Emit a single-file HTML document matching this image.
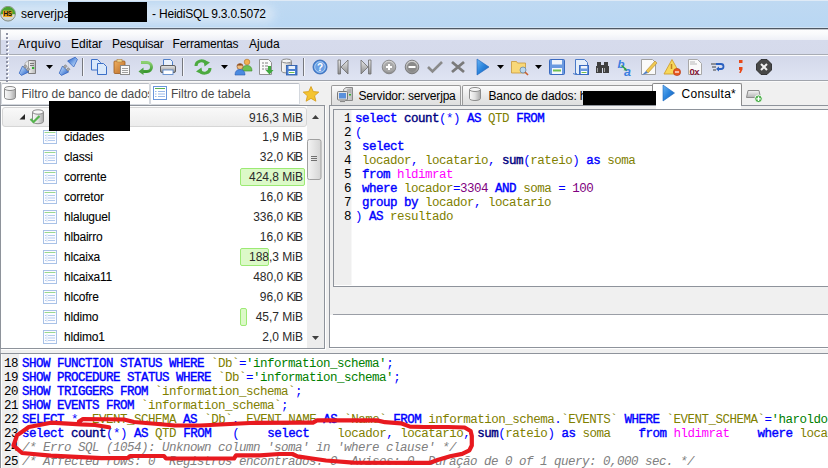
<!DOCTYPE html>
<html><head><meta charset="utf-8">
<style>
*{margin:0;padding:0;box-sizing:border-box}
body{width:828px;height:468px;overflow:hidden;position:relative;background:#f0f0f0;font-family:"Liberation Sans",sans-serif;font-size:12px;color:#000}
.a{position:absolute}
.t{white-space:pre;position:absolute;line-height:14px}
#title{left:0;top:0;width:828px;height:30px;background:linear-gradient(#dfeaf6 0px,#dfeaf6 1px,#bfd9f2 1px,#b9d7f3 27px,#d0e2f3 27px,#d0e2f3 28px,#4e5864 28px,#4e5864 29px,#c4c8ce 29px,#c4c8ce 30px)}
#menu{left:0;top:30px;width:828px;height:24px;background:linear-gradient(#fdfdfe 0px,#f9fafc 4px,#eef0f7 10px,#d6dbec 10px,#d5daeb 24px)}
#tool{left:0;top:54px;width:828px;height:28px;background:linear-gradient(#a8acb4 0px,#a8acb4 1px,#fafbfd 1px,#fafbfd 2px,#d3d8ea 2px,#dfe4f3 26px,#a0a4ac 26px,#a0a4ac 27px,#fafafa 27px,#fafafa 28px)}
.code{font-family:"Liberation Mono",monospace;font-size:12.5px;letter-spacing:-0.5px;line-height:14px;white-space:pre}
.k{color:#0000ff;-webkit-text-stroke:0.4px #0000ff}
.f{color:#000080;-webkit-text-stroke:0.4px #000080}
.i{color:#808000}
.s{color:#0000ff}
.n{color:#800080}
.tb{color:#ff00ff}
.st{color:#008000}
.c{color:#808080;font-style:italic}
.tree .r{position:absolute;left:0;width:305px;height:20px}
.tree .nm{position:absolute;left:62px;top:3px;white-space:pre;letter-spacing:-0.2px;-webkit-text-stroke:0.08px #000}
.tree .sz{position:absolute;right:4px;top:3px;white-space:pre;color:#2a2a2a}
.bar{position:absolute;left:238px;top:1px;height:18px;background:#dcf9c8;border:1px solid #9cea74;border-radius:2px}
.ti{position:absolute;left:41px;top:3px;width:14px;height:14px}
</style></head><body>

<!-- title bar -->
<div id="title" class="a"></div>
<div class="a" style="left:-10px;top:5px;width:285px;height:18px;background:#d8e7f6;border-radius:9px;filter:blur(4px);opacity:0.9"></div>
<svg class="a" style="left:0;top:6px" width="16" height="16" viewBox="0 0 16 16">
  <defs><linearGradient id="hsw" x1="0" y1="0" x2="0" y2="1"><stop offset="0" stop-color="#fafafa"/><stop offset="1" stop-color="#c8ccc8"/></linearGradient></defs>
  <circle cx="8" cy="7.7" r="7.4" fill="url(#hsw)" stroke="#7a8478" stroke-width="0.9"/>
  <path d="M0.6 8.2 A7.4 7.4 0 0 1 15.4 8.2 Z" fill="#4aa232"/>
  <rect x="3" y="4.6" width="9.3" height="6.4" fill="#f4a81e"/>
  <text x="7.7" y="10" font-family="Liberation Sans" font-weight="bold" font-size="6.4" text-anchor="middle" fill="#111" letter-spacing="-0.2">HS</text>
</svg>
<div class="t" style="left:21px;top:7px;font-size:12px;color:#000">serverjpa</div>
<div class="a" style="left:68px;top:2px;width:79px;height:20px;background:#000"></div>
<div class="t" style="left:149px;top:7px;font-size:12px;color:#000;letter-spacing:-0.22px"> - HeidiSQL 9.3.0.5072</div>

<!-- menu -->
<div id="menu" class="a"></div>
<div class="a" style="left:0;top:29px;width:1px;height:439px;background:#a8abb2"></div>
<div class="t" style="left:18px;top:37px;letter-spacing:0.35px">Arquivo</div>
<div class="t" style="left:71px;top:37px">Editar</div>
<div class="t" style="left:112px;top:37px;letter-spacing:-0.2px">Pesquisar</div>
<div class="t" style="left:172.5px;top:37px;letter-spacing:-0.2px">Ferramentas</div>
<div class="t" style="left:249px;top:37px">Ajuda</div>

<!-- toolbar -->
<div id="tool" class="a"></div>

<svg class="a" style="left:0;top:0" width="828" height="110" viewBox="0 0 828 110">
<defs>
<linearGradient id="gsrv" x1="0" x2="1"><stop offset="0" stop-color="#f4f4f4"/><stop offset="1" stop-color="#b8b8b8"/></linearGradient>
<linearGradient id="gblue" x1="0" y1="0" x2="0" y2="1"><stop offset="0" stop-color="#a8c8f0"/><stop offset="1" stop-color="#4a84d8"/></linearGradient>
<linearGradient id="ggray" x1="0" y1="0" x2="0" y2="1"><stop offset="0" stop-color="#e8e8e8"/><stop offset="1" stop-color="#8c8c8c"/></linearGradient>
<linearGradient id="gorange" x1="0" y1="0" x2="1" y2="1"><stop offset="0" stop-color="#f0b060"/><stop offset="1" stop-color="#b86a28"/></linearGradient>
<linearGradient id="ggreen" x1="0" y1="0" x2="0" y2="1"><stop offset="0" stop-color="#8cd070"/><stop offset="1" stop-color="#3a9a30"/></linearGradient>
<linearGradient id="gcirc" x1="0" y1="0" x2="0" y2="1"><stop offset="0" stop-color="#d8d8d8"/><stop offset="1" stop-color="#8a8a8a"/></linearGradient>
<linearGradient id="gcyl" x1="0" x2="1"><stop offset="0" stop-color="#fafafa"/><stop offset="0.5" stop-color="#e0e0e0"/><stop offset="1" stop-color="#a8a8a8"/></linearGradient>
<linearGradient id="gthumb" x1="0" x2="1"><stop offset="0" stop-color="#f4f4f4"/><stop offset="1" stop-color="#d4d4d4"/></linearGradient>
<linearGradient id="gplug" x1="0" y1="0" x2="0" y2="1"><stop offset="0" stop-color="#b4d0f4"/><stop offset="0.5" stop-color="#7aa6e6"/><stop offset="1" stop-color="#3c70cc"/></linearGradient>
<linearGradient id="gnt" x1="0" y1="0" x2="0" y2="1"><stop offset="0" stop-color="#f4f4f4"/><stop offset="1" stop-color="#b4b4b4"/></linearGradient>
<linearGradient id="gplay" x1="0" y1="0" x2="1" y2="1"><stop offset="0" stop-color="#6ab4f4"/><stop offset="0.5" stop-color="#2a84dc"/><stop offset="1" stop-color="#1a5cb4"/></linearGradient>
<linearGradient id="gtab" x1="0" y1="0" x2="0" y2="1"><stop offset="0" stop-color="#fbfbfb"/><stop offset="1" stop-color="#e4e4e4"/></linearGradient>
</defs>
<!-- grippers -->
<g><rect x="7" y="34" width="2" height="2" fill="#ffffff"/><rect x="6" y="33" width="2" height="2" fill="#8e92a4"/><rect x="7" y="38" width="2" height="2" fill="#ffffff"/><rect x="6" y="37" width="2" height="2" fill="#8e92a4"/><rect x="7" y="42" width="2" height="2" fill="#ffffff"/><rect x="6" y="41" width="2" height="2" fill="#8e92a4"/><rect x="7" y="46" width="2" height="2" fill="#ffffff"/><rect x="6" y="45" width="2" height="2" fill="#8e92a4"/><rect x="7" y="50" width="2" height="2" fill="#ffffff"/><rect x="6" y="49" width="2" height="2" fill="#8e92a4"/><rect x="7" y="54" width="2" height="2" fill="#ffffff"/><rect x="6" y="53" width="2" height="2" fill="#8e92a4"/><rect x="7" y="58" width="2" height="2" fill="#ffffff"/><rect x="6" y="57" width="2" height="2" fill="#8e92a4"/><rect x="7" y="62" width="2" height="2" fill="#ffffff"/><rect x="6" y="61" width="2" height="2" fill="#8e92a4"/><rect x="7" y="66" width="2" height="2" fill="#ffffff"/><rect x="6" y="65" width="2" height="2" fill="#8e92a4"/><rect x="7" y="70" width="2" height="2" fill="#ffffff"/><rect x="6" y="69" width="2" height="2" fill="#8e92a4"/><rect x="7" y="74" width="2" height="2" fill="#ffffff"/><rect x="6" y="73" width="2" height="2" fill="#8e92a4"/><rect x="7" y="78" width="2" height="2" fill="#ffffff"/><rect x="6" y="77" width="2" height="2" fill="#8e92a4"/><rect x="7" y="81" width="2" height="2" fill="#ffffff"/><rect x="6" y="80" width="2" height="2" fill="#8e92a4"/></g>
<!-- 1 server+plug -->
<path d="M28.5 60.5 h7 v13 h-7 z" fill="url(#gsrv)" stroke="#7c7c7c"/>
<path d="M25 63 L28.5 60.5 L28.5 68 L25 68 Z" fill="#e8e8e8" stroke="#9a9a9a" stroke-width="0.6"/>
<path d="M30 63.5h4M30 65.5h4" stroke="#7a7a7a"/>
<rect x="32" y="67" width="2.2" height="2" fill="#30b030"/>
<g transform="translate(20.3 74.3) rotate(-45)"><path d="M0 -1.6 L0 1.6 L7.5 4.3 L7.5 -4.3 Z" fill="url(#gplug)" stroke="#2f62c0" stroke-width="0.7"/><rect x="7.6" y="-3.2" width="2.8" height="2.3" fill="#a8a8a8" stroke="#6a6a6a" stroke-width="0.5"/><rect x="7.6" y="0.9" width="2.8" height="2.3" fill="#a8a8a8" stroke="#6a6a6a" stroke-width="0.5"/></g>
<!-- dropdown -->
<path d="M46 65h7l-3.5 4z" fill="#000"/>
<!-- 2 plug -->
<g transform="translate(60.3 74.3) rotate(-45)"><path d="M0 -1.6 L0 1.6 L7.5 4.3 L7.5 -4.3 Z" fill="url(#gplug)" stroke="#2f62c0" stroke-width="0.7"/><rect x="7.6" y="-3.2" width="2.8" height="2.3" fill="#a8a8a8" stroke="#6a6a6a" stroke-width="0.5"/><rect x="7.6" y="0.9" width="2.8" height="2.3" fill="#a8a8a8" stroke="#6a6a6a" stroke-width="0.5"/></g>
<g transform="translate(76.3 58.3) rotate(135)"><path d="M0 -1.6 L0 1.6 L8 4.3 L8 -4.3 Z" fill="url(#gplug)" stroke="#2f62c0" stroke-width="0.7"/></g>
<!-- separators -->
<path d="M82.5 58v18M182.5 58v18M303.5 58v18" stroke="#76787e"/>
<path d="M83.5 58v18M183.5 58v18M304.5 58v18" stroke="#f4f6fb"/>
<!-- copy -->
<path d="M91.5 59.5h6l3 3v7.5h-9z" fill="#dbe9fa" stroke="#3c70c8"/>
<path d="M97.5 63.5h6l3 3v8h-9z" fill="#dbe9fa" stroke="#3c70c8"/>
<!-- paste -->
<rect x="114" y="61" width="11" height="12.5" rx="1" fill="url(#gorange)" stroke="#9a5a20" stroke-width="0.8"/>
<rect x="117" y="59.5" width="5" height="2.5" fill="#f0d890" stroke="#b08040" stroke-width="0.6"/>
<rect x="120.5" y="65.5" width="9" height="9" fill="#fafafa" stroke="#8a8a8a"/>
<path d="M122 68.5h6M122 70.5h6M122 72.5h6" stroke="#a0a0a0"/>
<!-- undo -->
<path d="M141 62.5 H147 A4.5 4.5 0 0 1 147 71.5 H143" fill="none" stroke="url(#ggreen)" stroke-width="3"/>
<path d="M138.5 71.5 L143.5 67.5 L143.5 75 Z" fill="#4aa040"/>
<!-- print -->
<path d="M163.5 66v-6.5h7l2 2v4.5" fill="#eaf2fc" stroke="#5080c8"/>
<rect x="160.5" y="65.5" width="15" height="7" rx="1.5" fill="url(#ggray)" stroke="#606060"/>
<rect x="163" y="70" width="10" height="4.5" fill="#fff" stroke="#5080c8" stroke-width="0.8"/>
<!-- refresh -->
<path d="M196 66 A5.5 5 0 0 1 206 63" fill="none" stroke="#4caa40" stroke-width="3"/>
<path d="M203.5 59.5 L210 62.5 L204.5 66.5 Z" fill="#4caa40"/>
<path d="M210 68 A5.5 5 0 0 1 200 71" fill="none" stroke="#4caa40" stroke-width="3"/>
<path d="M202.5 74.5 L196 71.5 L201.5 67.5 Z" fill="#4caa40"/>
<path d="M221 65h7l-3.5 4z" fill="#000"/>
<!-- users -->
<circle cx="247" cy="62" r="2.8" fill="#f0b050" stroke="#b07020" stroke-width="0.6"/>
<path d="M242 71 Q242 65.5 247 65.5 Q252 65.5 252 71 Z" fill="#6cc050" stroke="#3a8a2a" stroke-width="0.6"/>
<circle cx="240" cy="66.5" r="3" fill="#f0c080" stroke="#8a4a20" stroke-width="0.6"/>
<path d="M236.5 65.5 Q240 62 243.5 65.5 Z" fill="#8a4a20"/>
<path d="M235 75 Q235 69.5 240 69.5 Q245 69.5 245 75 Z" fill="#4a8ae0" stroke="#2a5ab0" stroke-width="0.6"/>
<!-- doc w arrow -->
<path d="M259.5 59.5h9l3 3v12h-12z" fill="#fafafa" stroke="#909090"/>
<path d="M262 63h2M265 63h3M262 66h2M265 66h3M262 69h2M265 69h3" stroke="#808080"/>
<path d="M268 66h3v4h2.5l-4 4.5l-4 -4.5h2.5z" fill="#40a840"/>
<!-- db save -->
<path d="M281.5 61 v10 a5 2 0 0 0 10 0 v-10" fill="url(#gcyl)" stroke="#8c8c8c"/>
<ellipse cx="286.5" cy="61" rx="5" ry="2" fill="#f4f4f4" stroke="#8c8c8c"/>
<rect x="286.5" y="65.5" width="10.5" height="9.5" fill="#4a7ed0" stroke="#2a5aa8" stroke-width="0.8"/>
<rect x="288.5" y="66" width="6.5" height="3" fill="#e8f0fa"/>
<rect x="288.5" y="71" width="6.5" height="3" fill="#fff"/><rect x="289" y="72" width="5.5" height="1" fill="#70c050"/>
<!-- help -->
<circle cx="320" cy="67" r="7" fill="#4a88d8" stroke="#2a60b0" stroke-width="0.8"/>
<circle cx="320" cy="67" r="5.3" fill="#6aa0e4" stroke="#c8dcf4" stroke-width="0.8"/>
<text x="320" y="70.5" font-family="Liberation Sans" font-weight="bold" font-size="10" text-anchor="middle" fill="#fff">?</text>
<!-- first / last -->
<path d="M338 60h2.5v14h-2.5z M348 60v14l-7-7z" fill="url(#ggray)" stroke="#6c6c6c" stroke-width="0.8"/>
<path d="M371 60h-2.5v14h2.5z M361 60v14l7-7z" fill="url(#ggray)" stroke="#6c6c6c" stroke-width="0.8"/>
<!-- plus / minus -->
<circle cx="389" cy="67" r="6.8" fill="url(#gcirc)" stroke="#7a7a7a" stroke-width="0.8"/>
<circle cx="389" cy="67" r="5" fill="#a8a8a8"/>
<path d="M386 67h6M389 64v6" stroke="#fff" stroke-width="2"/>
<circle cx="412" cy="67" r="6.8" fill="url(#gcirc)" stroke="#6a6a6a" stroke-width="0.8"/>
<circle cx="412" cy="67" r="5" fill="#8a8a8a"/>
<path d="M408.5 67h7" stroke="#fff" stroke-width="2"/>
<!-- check / x -->
<path d="M428 67 L432.5 71.5 L442 62" fill="none" stroke="#8a8a8a" stroke-width="2.6"/>
<path d="M452 62 L464 72 M464 62 L452 72" stroke="#7a7a7a" stroke-width="2.8"/>
<!-- play -->
<path d="M477 59 L489 67 L477 75 Z" fill="url(#gplay)" stroke="#1a60b8" stroke-width="0.6"/>
<path d="M497 65h7l-3.5 4z" fill="#000"/>
<!-- folder search -->
<path d="M511.5 61.5h5l1 1.5h8v10h-14z" fill="#f8d878" stroke="#c89838" stroke-width="0.8"/>
<circle cx="523" cy="70" r="3" fill="#b8d8f0" stroke="#6888a8" stroke-width="0.8"/>
<path d="M525 72l3 3" stroke="#c86030" stroke-width="1.6"/>
<path d="M535 65h7l-3.5 4z" fill="#000"/>
<!-- floppy -->
<rect x="549.5" y="59.5" width="15" height="15" rx="1" fill="#6a9ae0" stroke="#3a6ac0"/>
<rect x="552" y="60" width="10" height="4.5" fill="#f0f4fa"/>
<rect x="552" y="68" width="10" height="6" fill="#f4f8fc"/>
<rect x="553" y="69.5" width="8" height="2" fill="#70c050"/>
<!-- floppy doc -->
<path d="M575.5 59.5h9l3 3v12h-12z" fill="#e4eefa" stroke="#4a7ac8"/>
<path d="M573 73.5 q2 1.5 4 0" fill="none" stroke="#4a7ac8"/>
<rect x="579.5" y="65.5" width="9" height="9" fill="#6a9ae0" stroke="#3a6ac0"/>
<rect x="581" y="66" width="6" height="2.5" fill="#f0f4fa"/>
<rect x="581" y="71" width="6" height="3" fill="#fff"/><rect x="581.5" y="72" width="5" height="1" fill="#70c050"/>
<!-- binoculars -->
<path d="M596 66h6v7h-6z M603 66h6v7h-6z M597 62h4v4h-4z M604 62h4v4h-4z M601 65h3v3h-3z" fill="#404040"/>
<path d="M597.5 68v4M604.5 68v4" stroke="#a0a0a0"/>
<!-- b->a -->
<text x="617.5" y="68" font-family="Liberation Sans" font-style="italic" font-weight="bold" font-size="11.5" fill="#3a7ee0">b</text>
<text x="624" y="75.5" font-family="Liberation Sans" font-style="italic" font-weight="bold" font-size="12.5" fill="#3a7ee0">a</text>
<path d="M621.5 65.5l4 3.5" stroke="#30a040" stroke-width="1.6"/>
<path d="M627 70.5 l-3.5 -0.2 l2.5 -2.5z" fill="#30a040"/>
<!-- pencil paper -->
<path d="M641.5 59.5h11l3 3v12h-14z" fill="#fafafa" stroke="#a0a0a0"/>
<path d="M646 71 L655 61 L657 63 L648 73 Z" fill="#f0c850" stroke="#b08830" stroke-width="0.6"/>
<path d="M646 71 L648 73 L642 75 Z" fill="#5080c8"/>
<!-- warning -->
<path d="M672 59.5 L680 74 L664 74 Z" fill="#f8d85a" stroke="#d0a030" stroke-width="0.9"/>
<path d="M671.5 64v5" stroke="#c08020" stroke-width="1.5"/>
<circle cx="677" cy="72" r="3.6" fill="#e85820" stroke="#b03010" stroke-width="0.6"/>
<path d="M675 72h4" stroke="#fff" stroke-width="1.2"/>
<!-- 0x doc -->
<path d="M688.5 59.5h9l4 4v11h-13z" fill="#fafafa" stroke="#a8a8a8"/>
<path d="M690 62h5M690 64h7" stroke="#b8b8b8"/>
<text x="689.5" y="74.5" font-family="Liberation Sans" font-weight="bold" font-size="9.5" fill="#801038" letter-spacing="-0.5">0x</text>
<!-- wrap -->
<path d="M711 64h5M712 67h4M713 70h3" stroke="#404040" stroke-width="1"/>
<path d="M716 64h5a2 2 0 0 1 0 5h-3" fill="none" stroke="#2a60c0" stroke-width="1.8"/>
<path d="M716 69 l3 -2.5 v5z" fill="#2a60c0"/>
<!-- semicolon -->
<rect x="739" y="60" width="3.5" height="3" fill="#e84818"/>
<path d="M739 67h3.5v2.5l-1.8 3.5h-1.5l1 -3h-1.2z" fill="#e84818"/>
<!-- close -->
<path d="M761 59.5h6l4.5 4.5v6l-4.5 4.5h-6l-4.5-4.5v-6z" fill="#484848" stroke="#202020" stroke-width="0.8"/>
<path d="M761 64 l6 6 M767 64 l-6 6" stroke="#f0f0f0" stroke-width="2"/>
</svg>

<!-- filter row -->
<div class="a" style="left:1px;top:82px;width:827px;height:23px;background:#f0f0f0"></div>
<div class="a" style="left:1px;top:83px;width:149px;height:22px;background:#fff;border:1px solid #d4d8de;border-top-color:#b8bcc4;border-radius:2px"></div>
<div class="t" style="left:21.5px;top:87px;width:127px;overflow:hidden;color:#4a4a4a">Filtro de banco de dados:</div>
<div class="a" style="left:150px;top:83px;width:150px;height:22px;background:#fff;border:1px solid #d4d8de;border-top-color:#b8bcc4;border-radius:2px"></div>
<div class="t" style="left:171px;top:87px;color:#4a4a4a">Filtro de tabela</div>

<!-- left panel -->
<div class="a" style="left:0px;top:105px;width:325px;height:244px;background:#fff;border:1px solid #8e939b;border-left:1px solid #8e939b;box-shadow:1px 1px 0 #fff"></div>

<div class="tree a" style="left:2px;top:106px;width:305px;height:242px;overflow:hidden">
<div class="r" style="top:1px;height:20px;background:linear-gradient(#f9f9f9,#ececec);border:1px solid #d6d6d6;border-radius:3px"><span class="sz" style="top:3px;right:3px">916,3 MiB</span></div>
<div class="r" style="top:21px"><svg class="ti" viewBox="0 0 14 14"><rect x="0.5" y="0.5" width="13" height="13" fill="#fdfdff" stroke="#a9c2e6"/><line x1="1.5" y1="2.5" x2="12.5" y2="2.5" stroke="#9ad890"/><path d="M5 5.5h7M5 8h7M5 10.5h7M2 5.5h1.5M2 8h1.5M2 10.5h1.5" stroke="#b4cbee" fill="none"/><path d="M4 4v8" stroke="#d8e4f6"/></svg><span class="nm">cidades</span><span class="sz">1,9 MiB</span></div>
<div class="r" style="top:41px"><svg class="ti" viewBox="0 0 14 14"><rect x="0.5" y="0.5" width="13" height="13" fill="#fdfdff" stroke="#a9c2e6"/><line x1="1.5" y1="2.5" x2="12.5" y2="2.5" stroke="#9ad890"/><path d="M5 5.5h7M5 8h7M5 10.5h7M2 5.5h1.5M2 8h1.5M2 10.5h1.5" stroke="#b4cbee" fill="none"/><path d="M4 4v8" stroke="#d8e4f6"/></svg><span class="nm">classi</span><span class="sz">32,0 <span style="letter-spacing:-1.1px">Ki</span>B</span></div>
<div class="r" style="top:61px"><div class="bar" style="width:65px"></div><svg class="ti" viewBox="0 0 14 14"><rect x="0.5" y="0.5" width="13" height="13" fill="#fdfdff" stroke="#a9c2e6"/><line x1="1.5" y1="2.5" x2="12.5" y2="2.5" stroke="#9ad890"/><path d="M5 5.5h7M5 8h7M5 10.5h7M2 5.5h1.5M2 8h1.5M2 10.5h1.5" stroke="#b4cbee" fill="none"/><path d="M4 4v8" stroke="#d8e4f6"/></svg><span class="nm">corrente</span><span class="sz">424,8 MiB</span></div>
<div class="r" style="top:81px"><svg class="ti" viewBox="0 0 14 14"><rect x="0.5" y="0.5" width="13" height="13" fill="#fdfdff" stroke="#a9c2e6"/><line x1="1.5" y1="2.5" x2="12.5" y2="2.5" stroke="#9ad890"/><path d="M5 5.5h7M5 8h7M5 10.5h7M2 5.5h1.5M2 8h1.5M2 10.5h1.5" stroke="#b4cbee" fill="none"/><path d="M4 4v8" stroke="#d8e4f6"/></svg><span class="nm">corretor</span><span class="sz">16,0 <span style="letter-spacing:-1.1px">Ki</span>B</span></div>
<div class="r" style="top:101px"><svg class="ti" viewBox="0 0 14 14"><rect x="0.5" y="0.5" width="13" height="13" fill="#fdfdff" stroke="#a9c2e6"/><line x1="1.5" y1="2.5" x2="12.5" y2="2.5" stroke="#9ad890"/><path d="M5 5.5h7M5 8h7M5 10.5h7M2 5.5h1.5M2 8h1.5M2 10.5h1.5" stroke="#b4cbee" fill="none"/><path d="M4 4v8" stroke="#d8e4f6"/></svg><span class="nm">hlaluguel</span><span class="sz">336,0 <span style="letter-spacing:-1.1px">Ki</span>B</span></div>
<div class="r" style="top:121px"><svg class="ti" viewBox="0 0 14 14"><rect x="0.5" y="0.5" width="13" height="13" fill="#fdfdff" stroke="#a9c2e6"/><line x1="1.5" y1="2.5" x2="12.5" y2="2.5" stroke="#9ad890"/><path d="M5 5.5h7M5 8h7M5 10.5h7M2 5.5h1.5M2 8h1.5M2 10.5h1.5" stroke="#b4cbee" fill="none"/><path d="M4 4v8" stroke="#d8e4f6"/></svg><span class="nm">hlbairro</span><span class="sz">16,0 <span style="letter-spacing:-1.1px">Ki</span>B</span></div>
<div class="r" style="top:141px"><div class="bar" style="width:29px"></div><svg class="ti" viewBox="0 0 14 14"><rect x="0.5" y="0.5" width="13" height="13" fill="#fdfdff" stroke="#a9c2e6"/><line x1="1.5" y1="2.5" x2="12.5" y2="2.5" stroke="#9ad890"/><path d="M5 5.5h7M5 8h7M5 10.5h7M2 5.5h1.5M2 8h1.5M2 10.5h1.5" stroke="#b4cbee" fill="none"/><path d="M4 4v8" stroke="#d8e4f6"/></svg><span class="nm">hlcaixa</span><span class="sz">188,3 MiB</span></div>
<div class="r" style="top:161px"><svg class="ti" viewBox="0 0 14 14"><rect x="0.5" y="0.5" width="13" height="13" fill="#fdfdff" stroke="#a9c2e6"/><line x1="1.5" y1="2.5" x2="12.5" y2="2.5" stroke="#9ad890"/><path d="M5 5.5h7M5 8h7M5 10.5h7M2 5.5h1.5M2 8h1.5M2 10.5h1.5" stroke="#b4cbee" fill="none"/><path d="M4 4v8" stroke="#d8e4f6"/></svg><span class="nm">hlcaixa11</span><span class="sz">480,0 <span style="letter-spacing:-1.1px">Ki</span>B</span></div>
<div class="r" style="top:181px"><svg class="ti" viewBox="0 0 14 14"><rect x="0.5" y="0.5" width="13" height="13" fill="#fdfdff" stroke="#a9c2e6"/><line x1="1.5" y1="2.5" x2="12.5" y2="2.5" stroke="#9ad890"/><path d="M5 5.5h7M5 8h7M5 10.5h7M2 5.5h1.5M2 8h1.5M2 10.5h1.5" stroke="#b4cbee" fill="none"/><path d="M4 4v8" stroke="#d8e4f6"/></svg><span class="nm">hlcofre</span><span class="sz">96,0 <span style="letter-spacing:-1.1px">Ki</span>B</span></div>
<div class="r" style="top:201px"><div class="bar" style="width:7px"></div><svg class="ti" viewBox="0 0 14 14"><rect x="0.5" y="0.5" width="13" height="13" fill="#fdfdff" stroke="#a9c2e6"/><line x1="1.5" y1="2.5" x2="12.5" y2="2.5" stroke="#9ad890"/><path d="M5 5.5h7M5 8h7M5 10.5h7M2 5.5h1.5M2 8h1.5M2 10.5h1.5" stroke="#b4cbee" fill="none"/><path d="M4 4v8" stroke="#d8e4f6"/></svg><span class="nm">hldimo</span><span class="sz">45,7 MiB</span></div>
<div class="r" style="top:221px"><svg class="ti" viewBox="0 0 14 14"><rect x="0.5" y="0.5" width="13" height="13" fill="#fdfdff" stroke="#a9c2e6"/><line x1="1.5" y1="2.5" x2="12.5" y2="2.5" stroke="#9ad890"/><path d="M5 5.5h7M5 8h7M5 10.5h7M2 5.5h1.5M2 8h1.5M2 10.5h1.5" stroke="#b4cbee" fill="none"/><path d="M4 4v8" stroke="#d8e4f6"/></svg><span class="nm">hldimo1</span><span class="sz">2,0 MiB</span></div>
</div>

<!-- filter icons & star -->
<svg class="a" style="left:0;top:80px" width="828" height="30" viewBox="0 80 828 30">
<path d="M4.5 88.5 v9 a5.5 2 0 0 0 11 0 v-9" fill="url(#gcyl)" stroke="#8c8c8c"/>
<ellipse cx="10" cy="88.5" rx="5.5" ry="2" fill="#f6f6f6" stroke="#8c8c8c"/>
<rect x="153.5" y="86.5" width="13" height="13" fill="#fff" stroke="#6a96dc"/>
<path d="M155 88.5h10" stroke="#58b050"/>
<path d="M158 91.5h7M158 94h7M158 96.5h7M155 91.5h1.5M155 94h1.5M155 96.5h1.5" stroke="#9ab8e8"/>
<path d="M311 86.5 L313.3 91.6 L318.8 92.1 L314.6 95.8 L315.9 101.2 L311 98.4 L306.1 101.2 L307.4 95.8 L303.2 92.1 L308.7 91.6 Z" fill="#f4c430" stroke="#d49a18" stroke-width="0.8"/>
</svg>

<!-- tabs -->
<div class="a" style="left:331px;top:85px;width:130px;height:21px;background:linear-gradient(#fcfcfc,#e6e6e6 60%,#dedede);border:1px solid #9a9a9a;border-bottom:none;border-radius:2px 2px 0 0"></div>
<div class="a" style="left:462px;top:85px;width:192px;height:21px;background:linear-gradient(#fcfcfc,#e6e6e6 60%,#dedede);border:1px solid #9a9a9a;border-bottom:none;border-radius:2px 2px 0 0"></div>
<div class="a" style="left:652px;top:83px;width:90px;height:23px;background:#fff;border:1px solid #8a8a8a;border-bottom:none;border-radius:2px 2px 0 0"></div>
<div class="t" style="left:358.5px;top:89px;letter-spacing:-0.19px">Servidor: serverjpa</div>
<div class="t" style="left:488.5px;top:89px;letter-spacing:-0.13px">Banco de dados: h</div>
<div class="a" style="left:583px;top:91px;width:73px;height:17px;background:#000"></div>
<div class="t" style="left:681.5px;top:87px;letter-spacing:0.28px">Consulta*</div>
<svg class="a" style="left:330px;top:80px" width="440" height="30" viewBox="330 80 440 30">
<path d="M343.5 89.5 L346 87.5 H352.5 V100.5 H345.5 Z" fill="url(#gsrv)" stroke="#8a8a8a"/>
<path d="M347 90h4M347 92h4" stroke="#9a9a9a"/>
<rect x="349" y="94" width="2" height="1.5" fill="#30b030"/>
<rect x="337.5" y="91.5" width="10" height="8.5" rx="1" fill="#e4e4e4" stroke="#7a7a7a"/>
<rect x="339" y="93" width="7" height="5.5" fill="#5a90dc"/>
<path d="M340 101.5h5" stroke="#8a8a8a" stroke-width="1.2"/>
<path d="M469.5 89.5 v9 a5.5 2 0 0 0 11 0 v-9" fill="url(#gcyl)" stroke="#8c8c8c"/>
<ellipse cx="475" cy="89.5" rx="5.5" ry="2" fill="#f6f6f6" stroke="#8c8c8c"/>
<path d="M663 85 L674.5 93 L663 101 Z" fill="url(#gplay)" stroke="#1a64bc" stroke-width="0.6"/>
<path d="M746.5 97.5 L748 90.5 H759 L760.5 97.5 Z" fill="url(#gnt)" stroke="#8c8c8c"/>
<circle cx="758.5" cy="98.8" r="3.8" fill="#4aae48" stroke="#fff" stroke-width="0.9"/>
<path d="M756.3 98.8h4.4M758.5 96.6v4.4" stroke="#fff" stroke-width="1.3"/>
</svg>

<!-- tree db row extras -->
<svg class="a" style="left:0;top:100px" width="330" height="250" viewBox="0 100 330 250">
<path d="M19.5 119.5 L25 114 L25 119.5 Z" fill="#262626"/>
<path d="M32.5 112 v9.5 a5.5 2.2 0 0 0 11 0 v-9.5" fill="url(#gcyl)" stroke="#8c8c8c"/>
<ellipse cx="38" cy="112" rx="5.5" ry="2.2" fill="#f8f8f8" stroke="#8c8c8c"/>
<path d="M30.5 119 L33.5 122 L39.5 116" fill="none" stroke="#56b44e" stroke-width="2.2"/>
<!-- scrollbar -->
<rect x="307" y="106" width="17" height="242" fill="#ededed"/>
<path d="M312 119h7l-3.5-4z" fill="#404040"/>
<path d="M312 336h7l-3.5 4z" fill="#404040"/>
<rect x="307.5" y="139.5" width="13.5" height="40" rx="2" fill="url(#gthumb)" stroke="#a0a0a0"/>
<path d="M311 156.5h6M311 158.5h6M311 160.5h6" stroke="#707070"/>
</svg>
<div class="a" style="left:49px;top:101px;width:81px;height:30px;background:#000"></div>

<!-- right panel -->
<div class="a" style="left:329px;top:105px;width:499px;height:243px;background:#f0f0f0;border:1px solid #8e939b;border-right:none;box-shadow:0 1px 0 #fff"></div>
<div class="a" style="left:333px;top:109px;width:495px;height:178px;background:#fff;border:1px solid #8e939b;border-right:none"></div>
<div class="a" style="left:334px;top:110px;width:17px;height:175px;background:#efefef"></div>
<div class="a" style="left:351px;top:110px;width:1px;height:175px;background:#f7f7f7"></div>
<div class="a" style="left:333px;top:314px;width:495px;height:33px;background:#fff;border-top:1px solid #9a9ea6"></div>
<div class="a" style="left:330px;top:315px;width:3px;height:32px;background:#fff"></div>
<div class="a" style="left:656px;top:105px;width:85px;height:4px;background:#fff"></div>

<div class="code a" style="left:334px;top:112px;width:17px;text-align:right">1
2
3
4
5
6
7
8</div>
<div class="code a" style="left:355px;top:112px"><span class="k">select</span> <span class="f">count</span><span class="s">(*)</span> <span class="k">AS</span> <span class="i">QTD</span> <span class="k">FROM</span>
<span class="s">(</span>
 <span class="k">select</span>
 <span class="i">locador</span><span class="s">,</span> <span class="i">locatario</span><span class="s">,</span> <span class="f">sum</span><span class="s">(</span><span class="i">rateio</span><span class="s">)</span> <span class="k">as</span> <span class="i">soma</span>
 <span class="k">from</span> <span class="tb">hldimrat</span>
 <span class="k">where</span> <span class="i">locador</span><span class="s">=</span><span class="n">3304</span> <span class="k">AND</span> <span class="i">soma</span> <span class="s">=</span> <span class="n">100</span>
 <span class="k">group by</span> <span class="i">locador</span><span class="s">,</span> <span class="i">locatario</span>
<span class="s">)</span> <span class="k">AS</span> <span class="i">resultado</span></div>

<!-- bottom log -->
<div class="a" style="left:0px;top:353px;width:828px;height:115px;background:#fff;border:1px solid #8e939b;border-right:none;border-bottom:none"></div>
<div class="a" style="left:2px;top:354px;width:17px;height:114px;background:#efefef"></div>
<div class="code a" style="left:-1px;top:356.5px;width:19px;text-align:right">18
19
20
21
22
23
24
25</div>
<div class="code a" style="left:22px;top:356.5px"><span class="k">SHOW FUNCTION STATUS WHERE</span> <span class="i">`Db`</span><span class="s">=</span><span class="st">'information_schema'</span><span class="s">;</span>
<span class="k">SHOW PROCEDURE STATUS WHERE</span> <span class="i">`Db`</span><span class="s">=</span><span class="st">'information_schema'</span><span class="s">;</span>
<span class="k">SHOW TRIGGERS FROM</span> <span class="i">`information_schema`</span><span class="s">;</span>
<span class="k">SHOW EVENTS FROM</span> <span class="i">`information_schema`</span><span class="s">;</span>
<span class="k">SELECT</span> <span class="s">*,</span> <span class="i">EVENT_SCHEMA</span> <span class="k">AS</span> <span class="i">`Db`</span><span class="s">,</span> <span class="i">EVENT_NAME</span> <span class="k">AS</span> <span class="i">`Name`</span> <span class="k">FROM</span> <span class="i">information_schema</span><span class="s">.</span><span class="i">`EVENTS`</span> <span class="k">WHERE</span> <span class="i">`EVENT_SCHEMA`</span><span class="s">=</span><span class="st">'haroldo'</span>
<span class="k">select</span> <span class="f">count</span><span class="s">(*)</span> <span class="k">AS</span> <span class="i">QTD</span> <span class="k">FROM</span>   <span class="s">(</span>    <span class="k">select</span>    <span class="i">locador</span><span class="s">,</span> <span class="i">locatario</span><span class="s">,</span> <span class="f">sum</span><span class="s">(</span><span class="i">rateio</span><span class="s">)</span> <span class="k">as</span> <span class="i">soma</span>    <span class="k">from</span> <span class="tb">hldimrat</span>    <span class="k">where</span> <span class="i">locador</span>
<span class="c">/* Erro SQL (1054): Unknown column 'soma' in 'where clause' */</span>
<span class="c">/* Affected rows: 0  Registros encontrados: 0  Avisos: 0  Duração de 0 of 1 query: 0,000 sec. */</span></div>

<svg class="a" style="left:0;top:0" width="828" height="468" viewBox="0 0 828 468"><path d="M109 427.3 L95 425 L81 424.4 L51 422.7 L28.8 427 L17 435.4 L13.5 445.5 L22 453 L50.8 455.7 L101.5 458.2 L128 457.8 L130 456 L164 456 L166 458.5 L234 458.5 L236 455.4 L260 455.4 L279 454 L292.4 454 L297.5 456.4 L312 458.5 L326 460.5 L353 462.6 L412 462.8 L430 462.8 L438.3 459.8 L450.2 456.3 L462.2 453.9 L469.4 450.3 L471.8 445.5 L471.8 436 L470.6 431 L464.6 427.5 L448 427 L424 427 L410 426.6 L401 423.3 L385 422.2 L377 420.4 L317 420.4 L313 422.6 L300 422.6 L250 423 L230 424 L200 425.5 L175 425.5 L158 424 L134 422 L124 419.5 L83 419 L79 421.5" fill="none" stroke="#e8191f" stroke-width="4.2" stroke-linejoin="round" stroke-linecap="round"/></svg>
</body></html>
